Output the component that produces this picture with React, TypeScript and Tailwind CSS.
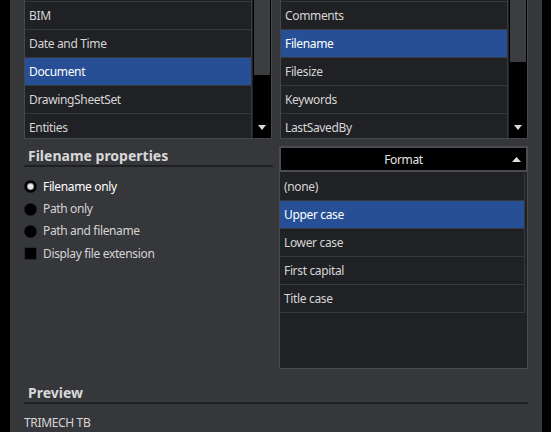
import React from "react";

function DownArrow() {
  return (
    <svg width="8" height="5" viewBox="0 0 8 5" className="block">
      <path d="M0 0 H8 L4 5 Z" fill="#d8d8d8" />
    </svg>
  );
}

function UpArrow() {
  return (
    <svg width="9" height="5" viewBox="0 0 9 5" className="block">
      <path d="M0 5 H9 L4.5 0 Z" fill="#e0e0e0" />
    </svg>
  );
}

function Row({ label, selected }: { label: string; selected?: boolean }) {
  return (
    <div
      className={
        "h-[28px] shrink-0 border-b border-[#37383c] pl-[4px] flex items-center text-[12px] tracking-[-0.35px] " +
        (selected ? "bg-[#264f96] text-white" : "text-[#d6d6d6]")
      }
    >
      {label}
    </div>
  );
}

function ListBox({ items, selected, thumbClass }: { items: string[]; selected: string; thumbClass: string }) {
  return (
    <div className="mt-[-27px] h-[166px] w-[248px] border border-[#46474b] bg-[#202124] flex overflow-hidden">
      <div className="w-[227px] border-r border-[#37383c] flex flex-col">
        {items.map((it, i) => (
          <Row key={i} label={it} selected={it === selected} />
        ))}
      </div>
      <div className="w-[1px]" />
      <div className="w-[18px] bg-black flex flex-col items-stretch">
        <div className={"mx-[1px] bg-[#3c3d41] " + thumbClass} />
        <div className="flex-1" />
        <div className="flex justify-center mb-[8px]">
          <DownArrow />
        </div>
      </div>
    </div>
  );
}

function Radio({ checked }: { checked?: boolean }) {
  return (
    <svg width="13" height="13" viewBox="0 0 13 13" className="block shrink-0">
      <circle cx="6.5" cy="6.5" r="6.3" fill="#000" stroke="#2a2a2a" strokeWidth="0.5" />
      {checked && <circle cx="6.5" cy="6.5" r="3.2" fill="#ececec" stroke="#8a8a8a" strokeWidth="1" />}
    </svg>
  );
}

export default function App() {
  return (
    <div className="w-[551px] h-[432px] bg-black flex overflow-hidden font-['Noto_Sans',sans-serif]">
      <div className="w-[10px] shrink-0" />
      <div className="w-[532px] shrink-0 h-full bg-[#36373b] px-[14px] overflow-hidden flex flex-col">
        {/* top lists */}
        <div className="flex gap-[8px]">
          <ListBox
            items={["", "BIM", "Date and Time", "Document", "DrawingSheetSet", "Entities"]}
            selected="Document"
            thumbClass="h-[101px]"
          />
          <ListBox
            items={["", "Comments", "Filename", "Filesize", "Keywords", "LastSavedBy"]}
            selected="Filename"
            thumbClass="h-[88px]"
          />
        </div>

        {/* middle */}
        <div className="flex gap-[6px]">
          <div className="w-[249px] flex flex-col">
            <div className="pt-[8px] pb-[1px] pl-[4px] border-b-2 border-[#1f2023] text-[14px] leading-[17px] font-bold text-[#d8d8d8]">
              Filename properties
            </div>
            <div className="mt-[8px] flex flex-col text-[12px] tracking-[-0.35px]">
              <div className="h-[23px] flex items-center gap-[6px] text-white">
                <Radio checked />
                <span>Filename only</span>
              </div>
              <div className="h-[22px] flex items-center gap-[6px] text-[#d4d4d4]">
                <Radio />
                <span>Path only</span>
              </div>
              <div className="h-[22px] flex items-center gap-[6px] text-[#d4d4d4]">
                <Radio />
                <span>Path and filename</span>
              </div>
              <div className="h-[23px] flex items-center gap-[6px] text-[#d4d4d4]">
                <div className="w-[13px] h-[13px] shrink-0 rounded-[2px] bg-black border border-[#2a2a2a]" />
                <span>Display file extension</span>
              </div>
            </div>
          </div>

          <div className="w-[249px] flex flex-col">
            <div className="mt-[7px] h-[26px] border-2 border-[#4b4c50] bg-black flex items-center relative">
              <div className="flex-1 pt-[2px] text-center text-[12px] tracking-[-0.35px] text-[#e4e4e4]">Format</div>
              <div className="absolute right-[5px] top-[9px]">
                <UpArrow />
              </div>
            </div>
            <div className="h-[197px] border-x border-b border-[#4a4b4f] bg-[#202124] pt-[1px]">
              <div className="mr-[2px] border-r border-[#37383c] flex flex-col">
                {["(none)", "Upper case", "Lower case", "First capital", "Title case"].map((it) => (
                  <Row key={it} label={it} selected={it === "Upper case"} />
                ))}
              </div>
            </div>
          </div>
        </div>

        {/* preview */}
        <div className="mt-[15px] pb-[1px] pl-[4px] border-b-2 border-[#1f2023] text-[14px] leading-[17px] font-bold text-[#d8d8d8]">
          Preview
        </div>
        <div className="mt-[11px] text-[12px] leading-[16px] tracking-[-0.35px] text-[#d6d6d6]">TRIMECH TB</div>
      </div>
      <div className="flex-1" />
    </div>
  );
}
